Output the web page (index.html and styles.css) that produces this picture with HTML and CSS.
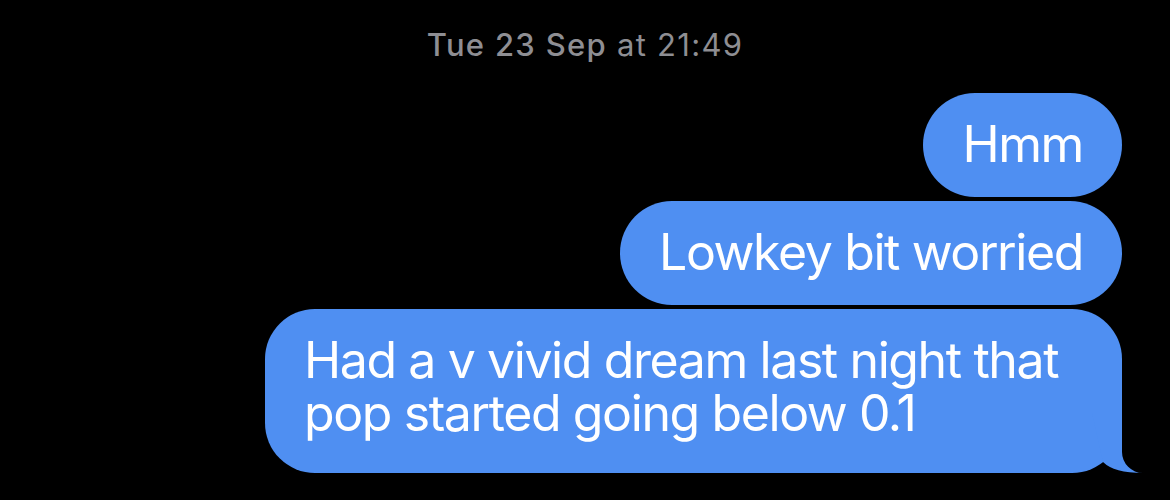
FILE: index.html
```html
<!DOCTYPE html>
<html lang="en">
<head>
  <meta charset="UTF-8">
  <title>Messages</title>
  <meta name="viewport" content="width=device-width, initial-scale=1">
  <link rel="stylesheet" href="styles.css">
</head>
<body>

  <div class="thread">
    <p class="thread-time"><strong>Tue 23 Sep</strong> at 21:49</p>

    <div class="thread-group">
      <div class="bubble">Hmm</div>
      <div class="bubble">Lowkey bit worried</div>
      <div class="bubble bubble-wide is-last">
        Had a v vivid dream last night that pop started going below 0.1
        <!-- the little tail under the last message -->
        <svg class="bubble-tail" viewBox="-50 -60 71 60" aria-hidden="true">
          <path d="M -19 -11 Q -8 0 21 0 A 21 21 0 0 1 0 -21 L 0 -60 L -30 -60 Z"/>
        </svg>
      </div>
    </div>
  </div>

</body>
</html>
```

FILE: styles.css
```css
body {
  margin: 0;
  background-color: #000;
  font-family: Inter, "Noto Sans", "Liberation Sans", sans-serif;
}

.thread {
  padding: 26px 48px 0 48px;
}

.thread-time {
  margin: 0;
  text-align: center;
  font-size: 31px;
  line-height: 38px;
  letter-spacing: 1.3px;
  color: #8e8e93;
  font-weight: 400;
}
.thread-time strong {
  font-weight: 500;
}

.thread-group {
  margin-top: 29px;
  display: flex;
  flex-direction: column;
  align-items: flex-end;
  gap: 4px;
}

.bubble {
  position: relative;
  padding: 25px 39px 26px;
  border-radius: 52px;
  background-color: #4f8ff2;
  color: #fff;
  font-size: 50px;
  line-height: 53px;
  letter-spacing: -1.4px;
}
.bubble-wide {
  max-width: 779px;
  border-radius: 50px;
}
.bubble.is-last {
  padding-bottom: 33px;
}

.bubble-tail {
  position: absolute;
  right: -21px;
  bottom: 0;
  width: 71px;
  height: 60px;
  fill: #4f8ff2;
}
```
